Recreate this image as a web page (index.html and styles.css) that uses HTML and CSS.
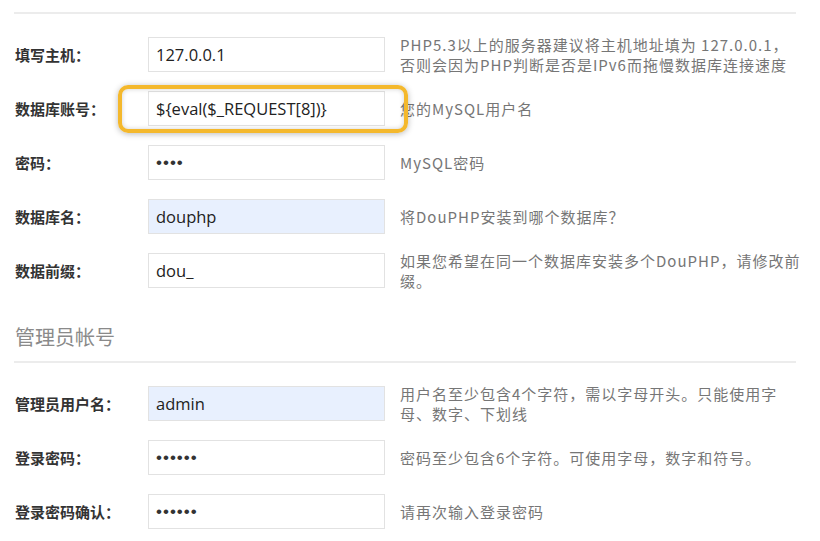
FILE: index.html
```html
<!DOCTYPE html>
<html lang="zh-CN">
<head>
<meta charset="utf-8">
<title>DouPHP 安装</title>
<link rel="stylesheet" href="styles.css">
</head>
<body>
<div class="page">
  <div class="rule"></div>
  <div class="rows">
    <div class="row">
      <label class="label">填写主机：</label>
      <input class="field" type="text" value="127.0.0.1">
      <p class="help"><span class="line">PHP5.3以上的服务器建议将主机地址填为 127.0.0.1，</span><span class="line">否则会因为PHP判断是否是IPv6而拖慢数据库连接速度</span></p>
    </div>
    <div class="row">
      <label class="label">数据库账号：</label>
      <input class="field" type="text" value="${eval($_REQUEST[8])}">
      <p class="help"><span class="line">您的MySQL用户名</span></p>
      <div class="marker"></div>
    </div>
    <div class="row">
      <label class="label">密码：</label>
      <input class="field" type="password" value="1234">
      <p class="help"><span class="line">MySQL密码</span></p>
    </div>
    <div class="row">
      <label class="label">数据库名：</label>
      <input class="field field-filled" type="text" value="douphp">
      <p class="help"><span class="line">将DouPHP安装到哪个数据库？</span></p>
    </div>
    <div class="row">
      <label class="label">数据前缀：</label>
      <input class="field" type="text" value="dou_">
      <p class="help"><span class="line">如果您希望在同一个数据库安装多个DouPHP，请修改前</span><span class="line">缀。</span></p>
    </div>
  </div>

  <h2 class="section-title">管理员帐号</h2>
  <div class="rule"></div>
  <div class="rows">
    <div class="row">
      <label class="label">管理员用户名：</label>
      <input class="field field-filled" type="text" value="admin">
      <p class="help"><span class="line">用户名至少包含4个字符，需以字母开头。只能使用字</span><span class="line">母、数字、下划线</span></p>
    </div>
    <div class="row">
      <label class="label">登录密码：</label>
      <input class="field" type="password" value="123456">
      <p class="help"><span class="line">密码至少包含6个字符。可使用字母，数字和符号。</span></p>
    </div>
    <div class="row">
      <label class="label">登录密码确认：</label>
      <input class="field" type="password" value="123456">
      <p class="help"><span class="line">请再次输入登录密码</span></p>
    </div>
  </div>
</div>
</body>
</html>
```

FILE: styles.css
```css
* { box-sizing: border-box; }

html, body {
  margin: 0;
  padding: 0;
  background: #ffffff;
}

body {
  font-family: "Noto Sans CJK SC", "Noto Sans", sans-serif;
  color: #333333;
}

.page {
  width: 782px;
  margin-left: 14px;
  padding-top: 12px;
}

.rule {
  height: 2px;
  background: #ececec;
}

.rows {
  padding-top: 13px;
}

.row {
  position: relative;
  display: flex;
  align-items: center;
  height: 54px;
  padding: 10px 0 9px;
}

.label {
  width: 134px;
  flex: none;
  padding-left: 1px;
  font-size: 15px;
  font-weight: 700;
  color: #333333;
  line-height: 20px;
}

.field {
  flex: none;
  width: 237px;
  height: 35px;
  margin: 0;
  padding: 0 7px;
  border: 1px solid #e2e2e2;
  border-radius: 0;
  background: #ffffff;
  font-family: "Open Sans", sans-serif;
  font-size: 16.5px;
  color: #222222;
  outline: none;
}

.field[type="password"] {
  font-family: "Liberation Sans", sans-serif;
  font-size: 17px;
  letter-spacing: 1px;
  color: #333333;
}

.field-filled {
  background: #e8f0fe;
}

.help {
  margin: 0 0 0 15px;
  display: flex;
  flex-direction: column;
  font-size: 15px;
  letter-spacing: 1px;
  color: #767676;
  white-space: nowrap;
}

.line {
  display: block;
  height: 20px;
  line-height: 20px;
}

.section-title {
  margin: 0;
  padding: 26px 0 10px 1px;
  font-size: 20px;
  line-height: 28px;
  font-weight: 400;
  color: #8a8a8a;
}

.marker {
  position: absolute;
  left: 104px;
  top: 4px;
  width: 290px;
  height: 48px;
  border: 4px solid #f4b82c;
  border-radius: 10px;
  box-shadow: 0 1px 6px rgba(0, 0, 0, 0.28), inset 0 0 5px rgba(0, 0, 0, 0.18);
  pointer-events: none;
}
```
